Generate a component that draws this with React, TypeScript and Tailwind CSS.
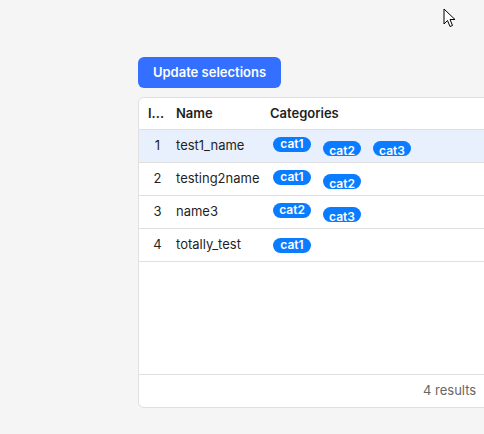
const rows = [
  { id: 1, name: "test1_name", cats: ["cat1", "cat2", "cat3"] },
  { id: 2, name: "testing2name", cats: ["cat1", "cat2"] },
  { id: 3, name: "name3", cats: ["cat2", "cat3"] },
  { id: 4, name: "totally_test", cats: ["cat1"] },
];

export default function App() {
  return (
    <div className="relative h-[434px] w-[484px] overflow-hidden bg-[#f5f5f5] font-[Inter,sans-serif] text-[13px] text-[#1f1f1f]">
      <svg className="absolute left-[443px] top-[8px]" width="13" height="20" viewBox="0 0 13 20">
        <path d="M1 1 L1 16 L4.5 12.5 L7 18.5 L9.5 17.5 L7 11.5 L12 11.5 Z" fill="white" stroke="black" strokeWidth="1" />
      </svg>
      <div className="ml-[138px] pt-[57px]">
        <button className="h-[31px] w-[143px] rounded-md bg-[#3370ff] text-[13px] font-semibold text-white">
          Update selections
        </button>
        <div className="mt-[9px] flex h-[311px] w-[400px] flex-col rounded-md border border-[#e0e0e0] bg-white">
          <div className="flex h-[32px] items-center border-b border-[#e0e0e0] font-semibold">
            <div className="w-[37px] pl-[9px]">I...</div>
            <div className="w-[94px]">Name</div>
            <div>Categories</div>
          </div>
          {rows.map((r) => (
            <div
              key={r.id}
              className={`flex h-[33px] items-center border-b border-[#e0e0e0] ${r.id === 1 ? "bg-[#e8f0fe]" : ""}`}
            >
              <div className="w-[37px] text-center">{r.id}</div>
              <div className="w-[97px]">{r.name}</div>
              <div className="flex gap-[12px]">
                {r.cats.map((c, i) => (
                  <span
                    key={c}
                    className={`flex h-[15px] w-[38px] items-center justify-center overflow-hidden rounded-full bg-[#0a7cff] text-[12px] font-semibold text-white ${i > 0 ? "mt-[4px] items-start pt-[1px]" : ""}`}
                  >
                    {c}
                  </span>
                ))}
              </div>
            </div>
          ))}
          <div className="flex-1" />
          <div className="flex h-[33px] items-center border-t border-[#e0e0e0] pl-[284px] text-[#666]">4 results</div>
        </div>
      </div>
    </div>
  );
}
